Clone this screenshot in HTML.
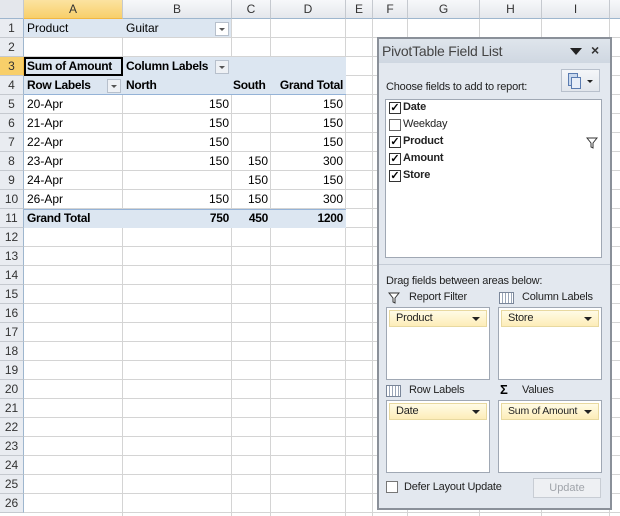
<html><head><style>
body{margin:0;width:620px;height:516px;overflow:hidden;background:#fff;font-family:"Liberation Sans",sans-serif;font-size:12px;position:relative}
.a{position:absolute;white-space:nowrap}
.hl{position:absolute;background:#d4d4d4}
.ch{position:absolute;top:0;height:19px;line-height:19px;text-align:center;color:#333;background:linear-gradient(#f7f8fa,#e4e7ec);border-right:1px solid #c5c9cf;border-bottom:1px solid #9eb6ce;box-sizing:border-box;font-size:12px}
.rh{position:absolute;left:0;width:24px;height:19px;line-height:19px;text-align:center;color:#333;background:#e9ecf1;border-bottom:1px solid #c5c9cf;border-right:1px solid #9eb6ce;box-sizing:border-box;font-size:12px}
.c{position:absolute;height:19px;line-height:19px;font-size:12px;color:#000;box-sizing:border-box;padding:0 3px;white-space:nowrap}
.r{text-align:right}
.b{font-weight:bold;letter-spacing:-0.3px}
.dd{position:absolute;width:14px;height:14px;border:1px solid #b7c0cc;background:#eef1f5;box-sizing:border-box}
.dd:after{content:"";position:absolute;left:3px;top:5px;border-left:3px solid transparent;border-right:3px solid transparent;border-top:3px solid #555}
.cb{position:absolute;width:12px;height:12px;border:1px solid #333;background:#fff;box-sizing:border-box;font-size:11px;line-height:10px;text-align:center;font-weight:bold}
.box{position:absolute;background:#fff;border:1px solid #a0a8b4;box-sizing:border-box}
.fld{position:absolute;left:2px;right:2px;top:2px;height:17px;background:linear-gradient(#fffbe6,#fdedb8);border:1px solid #e8d9a0;box-sizing:border-box;font-size:11px;line-height:15px;padding-left:6px;color:#222;letter-spacing:-0.2px}
.fld:after{content:"";position:absolute;right:6px;top:6px;border-left:4px solid transparent;border-right:4px solid transparent;border-top:4px solid #222}
.p{font-size:11px;color:#222;letter-spacing:-0.2px}
</style></head><body>
<div class="ch" style="left:0;width:24px;background:#e4e7ec"></div>
<div class="ch" style="left:24px;width:99px;background:linear-gradient(#fbe3a0,#f8cf6a);border-bottom:1px solid #f2b742">A</div>
<div class="ch" style="left:123px;width:109px">B</div>
<div class="ch" style="left:232px;width:39px">C</div>
<div class="ch" style="left:271px;width:75px">D</div>
<div class="ch" style="left:346px;width:27px">E</div>
<div class="ch" style="left:373px;width:35px">F</div>
<div class="ch" style="left:408px;width:72px">G</div>
<div class="ch" style="left:480px;width:62px">H</div>
<div class="ch" style="left:542px;width:68px">I</div>
<div class="ch" style="left:610px;width:20px"></div>
<div id="rows"></div>
<script>
var s='';for(var i=1;i<=26;i++){var y=19+(i-1)*19;s+='<div class="rh" style="top:'+y+'px'+(i==3?';background:#f8cf6a;border-right-color:#f2b742':'')+'">'+i+'</div><div class="hl" style="left:24px;width:596px;top:'+(y+18)+'px;height:1px"></div>';}
[123,232,271,346,373,408,480,542,610].forEach(function(x){s+='<div class="hl" style="left:'+(x-1)+'px;top:19px;width:1px;height:497px"></div>'});
document.getElementById('rows').innerHTML=s;
</script>
<div class="a" style="left:24px;top:19px;width:207px;height:18px;background:#dce6f1"></div>
<div class="a" style="left:24px;top:57px;width:322px;height:38px;background:#dce6f1"></div>
<div class="a" style="left:24px;top:94px;width:322px;height:1px;background:#95b3d7"></div>
<div class="a" style="left:24px;top:209px;width:322px;height:19px;background:#dce6f1;border-top:1px solid #95b3d7;box-sizing:border-box"></div>
<div class="c" style="left:24px;top:19px">Product</div>
<div class="c" style="left:123px;top:19px">Guitar</div>
<div class="dd" style="left:215px;top:22px;background:#fff"></div>
<div class="c b" style="left:24px;top:57px;width:99px;border:2px solid #000;line-height:15px;padding-left:1px">Sum of Amount</div>
<div class="c b" style="left:123px;top:57px">Column Labels</div>
<div class="dd" style="left:215px;top:60px"></div>
<div class="c b" style="left:24px;top:76px">Row Labels</div>
<div class="dd" style="left:107px;top:79px"></div>
<div class="c b" style="left:123px;top:76px">North</div>
<div class="c b" style="left:230px;top:76px">South</div>
<div class="c b r" style="left:271px;top:76px;width:75px">Grand Total</div>
<div id="data"></div>
<script>
var d=[['20-Apr','150','','150'],['21-Apr','150','','150'],['22-Apr','150','','150'],['23-Apr','150','150','300'],['24-Apr','','150','150'],['26-Apr','150','150','300'],['Grand Total','750','450','1200']];var t='';
d.forEach(function(r,i){var y=95+i*19,b=i==6?' b':'';t+='<div class="c'+b+'" style="left:24px;top:'+y+'px">'+r[0]+'</div><div class="c r'+b+'" style="left:123px;top:'+y+'px;width:109px">'+r[1]+'</div><div class="c r'+b+'" style="left:232px;top:'+y+'px;width:39px">'+r[2]+'</div><div class="c r'+b+'" style="left:271px;top:'+y+'px;width:75px">'+r[3]+'</div>'});
document.getElementById('data').innerHTML=t;
</script>
<div class="a" style="left:377px;top:37px;width:235px;height:473px;background:#e3e8ef;border:2px solid #8a9099;box-sizing:border-box"></div>
<div class="a" style="left:379px;top:39px;width:231px;height:24px;background:linear-gradient(#dfe5ec,#cfd7e1)"></div>
<div class="a" style="left:382px;top:43px;font-size:14px;color:#444;letter-spacing:-0.2px">PivotTable Field List</div>
<div class="a" style="left:570px;top:48px;border-left:6px solid transparent;border-right:6px solid transparent;border-top:7px solid #222"></div>
<div class="a" style="left:591px;top:42px;font-size:14px;font-weight:bold;color:#333">×</div>
<div class="a" style="left:561px;top:69px;width:39px;height:23px;border:1px solid #b8c0cc;background:linear-gradient(#f4f6f9,#e2e6ec);box-sizing:border-box"></div>
<div class="a" style="left:568px;top:73px;width:8px;height:11px;border:1px solid #5a7bb0;background:#c8d8ee"></div>
<div class="a" style="left:571px;top:77px;width:8px;height:10px;border:1px solid #5a7bb0;background:#e8eef8"></div>
<div class="a" style="left:587px;top:80px;border-left:3px solid transparent;border-right:3px solid transparent;border-top:3px solid #222"></div>
<div class="a p" style="left:386px;top:81px">Choose fields to add to report:</div>
<div class="box" style="left:385px;top:99px;width:217px;height:159px"></div>
<div class="cb" style="left:389px;top:102px">✓</div><div class="a p b" style="left:403px;top:101px">Date</div>
<div class="cb" style="left:389px;top:119px;border-color:#666"></div><div class="a p" style="left:403px;top:118px">Weekday</div>
<div class="cb" style="left:389px;top:136px">✓</div><div class="a p b" style="left:403px;top:135px">Product</div>
<svg class="a" style="left:586px;top:137px" width="12" height="12" viewBox="0 0 12 12"><path d="M1 1h10L7 6v5L5 10V6z" fill="#fff" stroke="#333"/></svg>
<div class="cb" style="left:389px;top:153px">✓</div><div class="a p b" style="left:403px;top:152px">Amount</div>
<div class="cb" style="left:389px;top:170px">✓</div><div class="a p b" style="left:403px;top:169px">Store</div>
<div class="a" style="left:379px;top:264px;width:231px;height:1px;background:#c5ccd6"></div>
<div class="a p" style="left:386px;top:275px">Drag fields between areas below:</div>
<svg class="a" style="left:388px;top:292px" width="12" height="12" viewBox="0 0 12 12"><path d="M1 1h10L7 6v5L5 10V6z" fill="#fff" stroke="#333"/></svg><div class="a p" style="left:409px;top:291px">Report Filter</div>
<div class="a" style="left:499px;top:292px;width:13px;height:10px;border:1px solid #7a8699;background:repeating-linear-gradient(90deg,#fff 0 2px,#9aa6b8 2px 3px)"></div><div class="a p" style="left:522px;top:291px">Column Labels</div>
<div class="box" style="left:386px;top:307px;width:104px;height:73px"><div class="fld">Product</div></div>
<div class="box" style="left:498px;top:307px;width:104px;height:73px"><div class="fld">Store</div></div>
<div class="a" style="left:386px;top:385px;width:13px;height:10px;border:1px solid #7a8699;background:repeating-linear-gradient(90deg,#fff 0 2px,#9aa6b8 2px 3px)"></div><div class="a p" style="left:409px;top:384px">Row Labels</div>
<div class="a b" style="left:500px;top:382px;font-size:13px">Σ</div><div class="a p" style="left:522px;top:384px">Values</div>
<div class="box" style="left:386px;top:400px;width:104px;height:73px"><div class="fld">Date</div></div>
<div class="box" style="left:498px;top:400px;width:104px;height:73px"><div class="fld" style="font-size:10.5px">Sum of Amount</div></div>
<div class="cb" style="left:386px;top:481px;border-color:#777;width:12px;height:12px"></div>
<div class="a p" style="left:404px;top:481px">Defer Layout Update</div>
<div class="a" style="left:533px;top:478px;width:68px;height:20px;border:1px solid #c8cdd4;background:#eef0f3;box-sizing:border-box;text-align:center;line-height:18px;font-size:11px;color:#a0a4aa">Update</div>
</body></html>
